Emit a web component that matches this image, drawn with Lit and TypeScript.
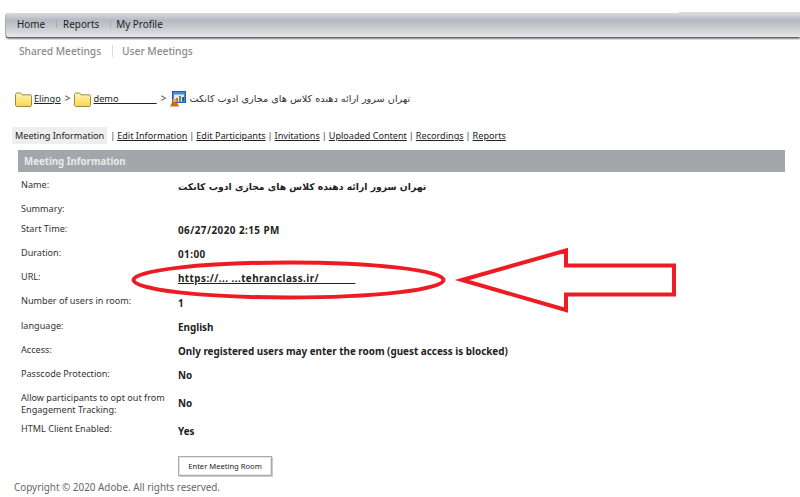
import { LitElement, html, css } from "lit";
import { customElement } from "lit/decorators.js";

const TITLE = "تهران سرور ارائه دهنده کلاس های مجازی ادوب کانکت";
const folder = html`<svg class="folder" width="17" height="15" viewBox="0 0 17 15">
  <defs><linearGradient id="fg" x1="0" y1="0" x2="0" y2="1"><stop offset="0" stop-color="#fff6b8"/><stop offset="1" stop-color="#f6d64e"/></linearGradient></defs>
  <path d="M.5 13V2.500C.5 1.700 1.200 1 2 1h3.500l1.500 1.800H15c.9 0 1.500.6 1.500 1.500V13c0 .9-.6 1.500-1.500 1.500H2C1.200 14.500.5 13.900.5 13z" fill="url(#fg)" stroke="#a08a3c"/>
</svg>`;
const meetingIcon = html`<svg class="mi" width="16" height="16" viewBox="0 0 16 16">
  <rect x="2.500" y=".5" width="13" height="11" fill="#4f86d8" stroke="#2c5aa8"/>
  <rect x="4" y="3.500" width="10" height="7" fill="#dfe9f7"/>
  <rect x="6" y="7" width="2" height="3.500" fill="#d9622a"/><rect x="9" y="5" width="2" height="5.500" fill="#4aa04a"/><rect x="12" y="6" width="2" height="4.500" fill="#2c5aa8"/>
  <circle cx="4.500" cy="9.500" r="2" fill="#f0b030"/><path d="M0 15.500 2 11.500h5l2 4z" fill="#c8701c"/>
</svg>`;

const rows: [string, unknown, string][] = [
  ["Name:", html`<span class="fa">${TITLE}</span>`, "h24"],
  ["Summary:", "", "h20"],
  ["Start Time:", html`<span class="wide">06/27/2020 2:15 PM</span>`, "h24"],
  ["Duration:", html`<span class="wide">01:00</span>`, "h24"],
  ["URL:", html`<a class="wide" href="#">https://...&nbsp;...tehranclass.ir/&nbsp;&nbsp;&nbsp;&nbsp;&nbsp;&nbsp;&nbsp;&nbsp;&nbsp;&nbsp;&nbsp;&nbsp;</a>`, "h24"],
  ["Number of users in room:", "1", "h25"],
  ["language:", "English", "h24"],
  ["Access:", "Only registered users may enter the room (guest access is blocked)", "h24"],
  ["Passcode Protection:", "No", "h24"],
  ["Allow participants to opt out from Engagement Tracking:", "No", "h31"],
  ["HTML Client Enabled:", "Yes", "h26"],
];
const tabs = ["Edit Information", "Edit Participants", "Invitations", "Uploaded Content", "Recordings", "Reports"];

@customElement("app-root")
export class AppRoot extends LitElement {
  static styles = css`
    :host { display: block; position: relative; width: 800px; height: 497px; overflow: hidden; background: #fff; color: #222;
      font-family: "Noto Sans", "DejaVu Sans", sans-serif; font-size: 9.100px; }
    a { color: #222; text-decoration: underline; }
    .nav { position: relative; margin: 13px 0 0 5px; height: 24px; box-sizing: border-box; display: flex; align-items: center; padding: 0 0 3px 11px;
      background: linear-gradient(#d9dbde 0, #b5b9c1 30%, #c6c9ce 60%, #e6e8ea 100%); border-left: 1px solid #aaa; border-radius: 4px 0 0 4px;
      box-shadow: 0 2px 0 -0.5px #666, 0 3px 0 0 #ddd; font-size: 9.900px; color: #222; }
    .nav::after { content: ""; position: absolute; right: 0; top: -1px; width: 121px; height: 1px; background: #d8dadc; }
    .nav i { width: 1px; height: 9px; background: #a8abb2; margin: 0 6px 0 11px; }
    .nav i:nth-of-type(2) { margin-right: 5px; }
    .sub { margin: 7px 0 0 19px; height: 13px; display: flex; align-items: center; color: #8a8a8a; font-size: 10.200px; font-weight: 500; }
    .sub i { width: 1px; height: 12px; background: #ddd; margin: 0 9px 0 11px; }
    .crumb { margin: 31px 0 0 15px; height: 20px; display: flex; align-items: center; font-size: 9.200px; color: #444; }
    .folder { margin-right: 2px; flex: none; margin-top: 3px; }
    .sep { margin: 0 4px; font-size: 10px; }
    .mi { margin-right: 3px; flex: none; margin-top: 1px; }
    .fa { font-family: "DejaVu Sans", "Noto Sans", sans-serif; direction: rtl; unicode-bidi: isolate; }
    .crumb .fa { font-size: 9.700px; color: #333; }
    .tabs { margin: 19px 0 0 12px; height: 17px; display: flex; align-items: center; font-size: 9.100px; }
    .tabs b { font-weight: 400; background: #eee; padding: 0 3px; height: 17px; line-height: 17px; margin-right: 1px; }
    .tabs em { font-style: normal; margin: 0 2px; color: #444; }
    .head { margin: 6px 15px 0 18px; height: 22px; line-height: 24px; background: #a3a7ab; color: #e9eaec; font-weight: 700; font-size: 9.700px; padding-left: 6px; }
    .table { margin: 2px 0 0 21px; }
    .row { display: grid; grid-template-columns: 157px 1fr; }
    .l { font-size: 9.100px; line-height: 11.500px; padding-top: 5px; color: #333; width: 150px; }
    .v { font-weight: 700; font-size: 9.900px; align-self: center; color: #222; }
    .v .fa { font-size: 9.250px; }
    .wide { letter-spacing: .45px; }
    .h24 { height: 24px; } .h20 { height: 20px; } .h25 { height: 25px; } .h31 { height: 31px; } .h26 { height: 26px; }
    .btnrow { margin: 12px 0 0 178px; }
    button { display: block; width: 94px; height: 20px; padding: 0; background: #fff; border: 1px solid #aaa; box-shadow: inset 0 0 0 1px #e6e6e6, 1px 1px 0 #ccc;
      font: 7.600px "Noto Sans", sans-serif; color: #222; }
    .copy { margin: 5px 0 0 14px; font-size: 9.900px; color: #666; line-height: 12px; }
    .marks { position: absolute; left: 0; top: 0; pointer-events: none; }
  `;

  render() {
    return html`
      <div class="nav"><span>Home</span><i></i><span>Reports</span><i></i><span>My Profile</span></div>
      <div class="sub"><span>Shared Meetings</span><i></i><span>User Meetings</span></div>
      <div class="crumb">
        ${folder}<a href="#">Elingo</a><span class="sep">&gt;</span>
        ${folder}<a href="#">demo&nbsp;&nbsp;&nbsp;&nbsp;&nbsp;&nbsp;&nbsp;&nbsp;&nbsp;&nbsp;&nbsp;&nbsp;&nbsp;&nbsp;&nbsp;&nbsp;</a><span class="sep">&gt;</span>
        ${meetingIcon}<span class="fa">${TITLE}</span>
      </div>
      <div class="tabs"><b>Meeting Information</b>${tabs.map((t) => html`<em>|</em><a href="#">${t}</a>`)}</div>
      <div class="head">Meeting Information</div>
      <div class="table">
        ${rows.map(([l, v, h]) => html`<div class="row ${h}"><div class="l">${l}</div><div class="v">${v}</div></div>`)}
      </div>
      <div class="btnrow"><button>Enter Meeting Room</button></div>
      <div class="copy">Copyright © 2020 Adobe. All rights reserved.</div>
      <svg class="marks" width="800" height="497" viewBox="0 0 800 497" fill="none" stroke="#ed1c24">
        <ellipse cx="288.500" cy="280" rx="155" ry="17.500" stroke-width="4"/>
        <path d="M462 280 566 250.500V265.500H674V294.500H566V310Z" stroke-width="4"/>
      </svg>
    `;
  }
}
